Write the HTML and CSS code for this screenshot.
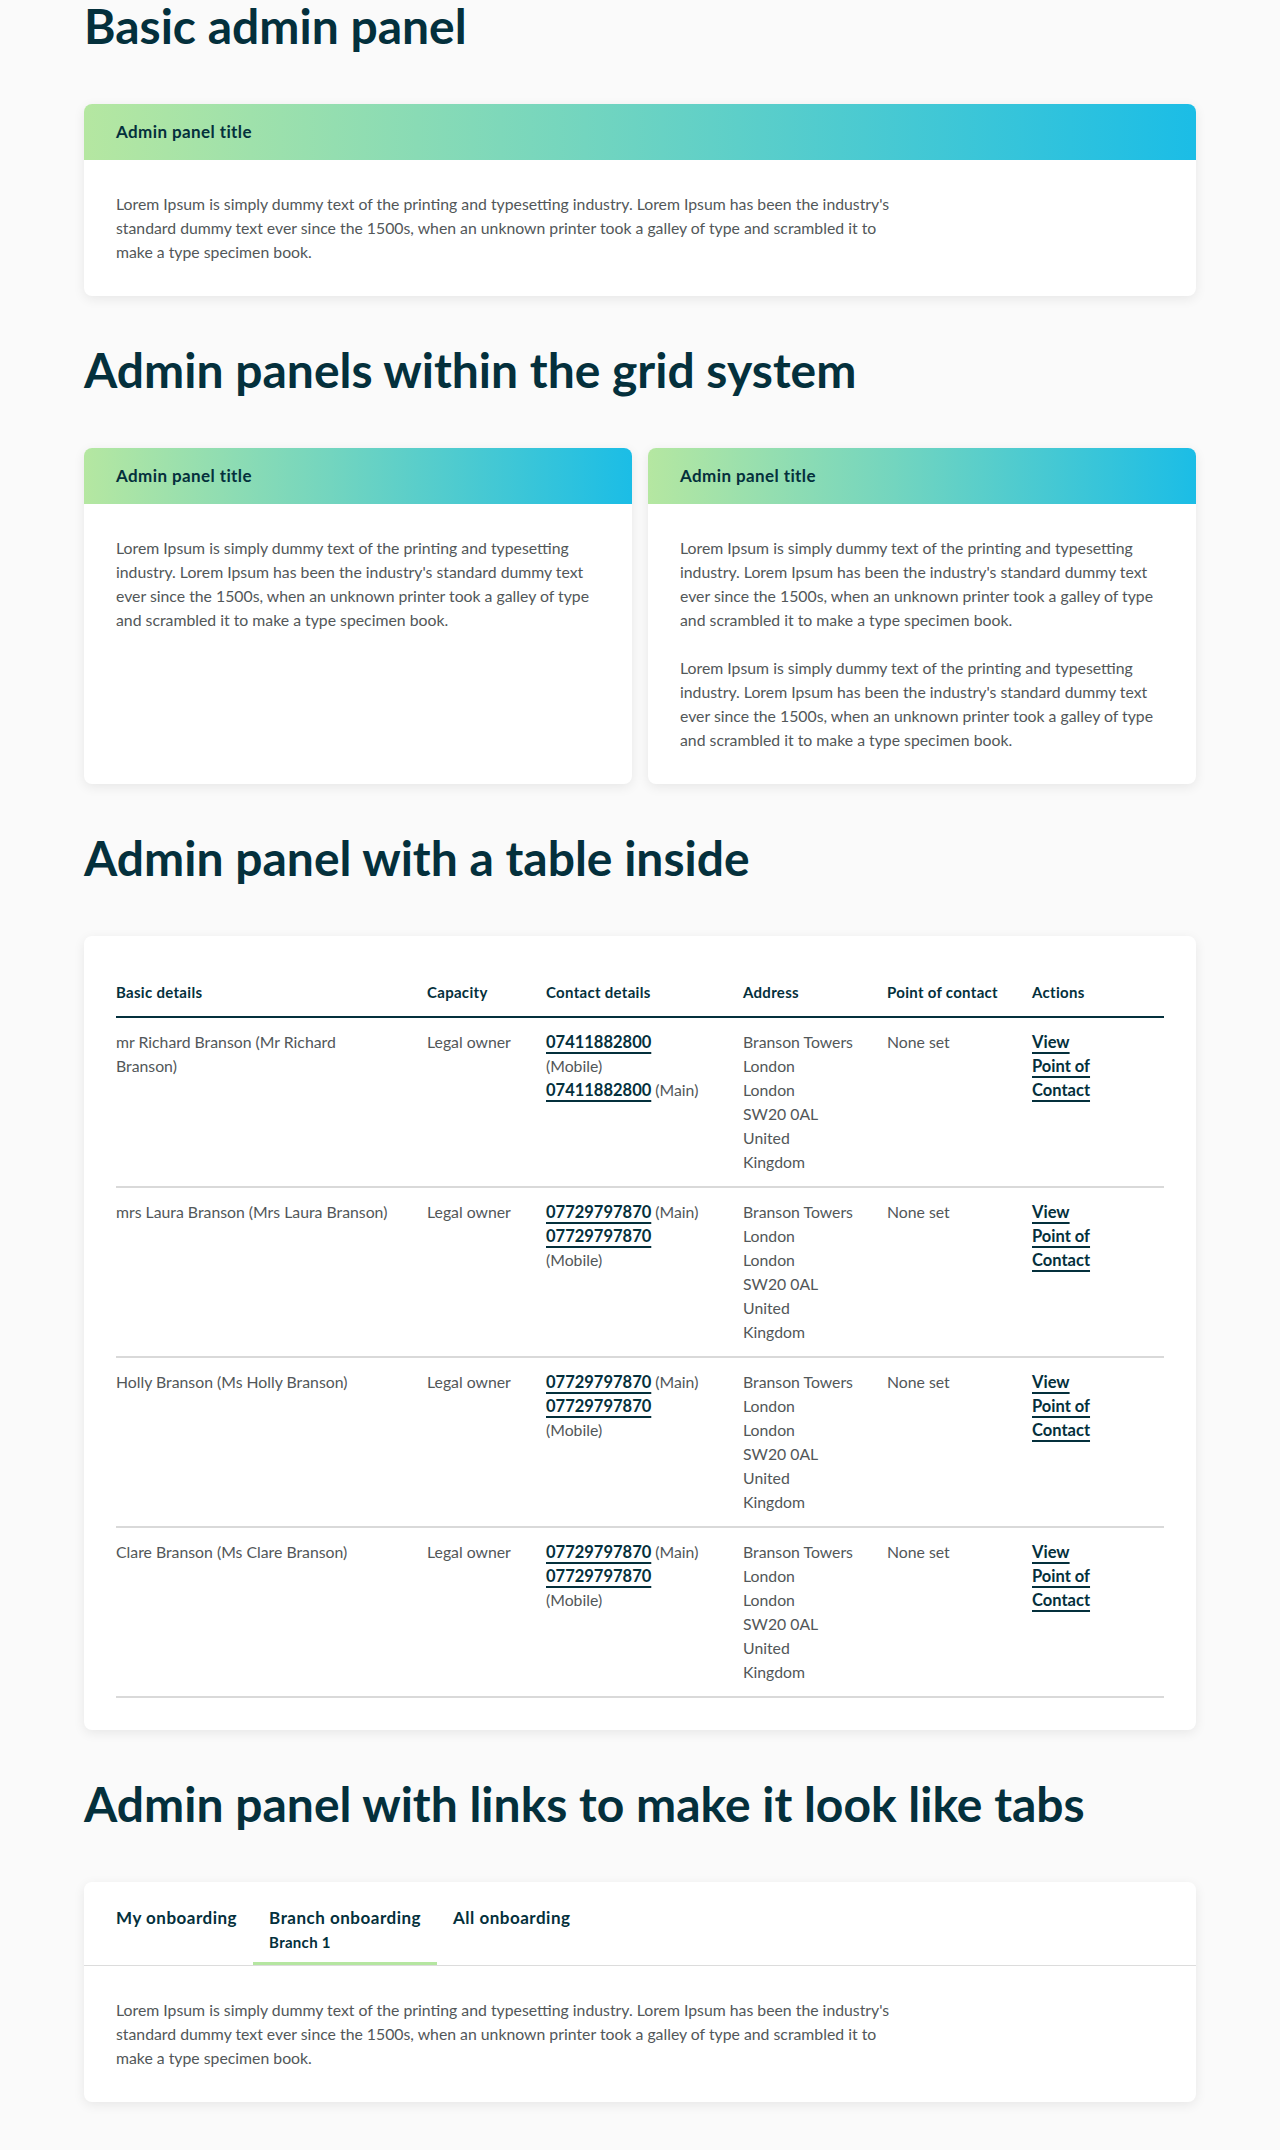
FILE: index.html
```html
<!DOCTYPE html>
<html lang="en">
<head>
<meta charset="utf-8">
<title>Admin panels</title>
<link rel="stylesheet" href="styles.css">
</head>
<body>
<main class="page">
  <section class="section">
    <h1 class="section-title">Basic admin panel</h1>
    <div class="panel">
      <div class="panel-header"><h2 class="panel-title">Admin panel title</h2></div>
      <div class="panel-body">
        <p class="panel-text panel-text-limited">Lorem Ipsum is simply dummy text of the printing and typesetting industry. Lorem Ipsum has been the industry's standard dummy text ever since the 1500s, when an unknown printer took a galley of type and scrambled it to make a type specimen book.</p>
      </div>
    </div>
  </section>

  <section class="section">
    <h1 class="section-title">Admin panels within the grid system</h1>
    <div class="panel-grid">
      <div class="panel">
        <div class="panel-header"><h2 class="panel-title">Admin panel title</h2></div>
        <div class="panel-body">
          <p class="panel-text">Lorem Ipsum is simply dummy text of the printing and typesetting industry. Lorem Ipsum has been the industry's standard dummy text ever since the 1500s, when an unknown printer took a galley of type and scrambled it to make a type specimen book.</p>
        </div>
      </div>
      <div class="panel">
        <div class="panel-header"><h2 class="panel-title">Admin panel title</h2></div>
        <div class="panel-body">
          <p class="panel-text">Lorem Ipsum is simply dummy text of the printing and typesetting industry. Lorem Ipsum has been the industry's standard dummy text ever since the 1500s, when an unknown printer took a galley of type and scrambled it to make a type specimen book.</p>
          <p class="panel-text">Lorem Ipsum is simply dummy text of the printing and typesetting industry. Lorem Ipsum has been the industry's standard dummy text ever since the 1500s, when an unknown printer took a galley of type and scrambled it to make a type specimen book.</p>
        </div>
      </div>
    </div>
  </section>

  <section class="section">
    <h1 class="section-title">Admin panel with a table inside</h1>
    <div class="panel">
      <div class="panel-body">
        <table class="data-table">
          <colgroup>
            <col class="col-basic">
            <col class="col-capacity">
            <col class="col-contact">
            <col class="col-address">
            <col class="col-poc">
            <col class="col-actions">
          </colgroup>
          <thead>
            <tr>
              <th class="cell-basic">Basic details</th>
              <th>Capacity</th>
              <th class="cell-contact">Contact details</th>
              <th class="cell-address">Address</th>
              <th>Point of contact</th>
              <th class="cell-actions">Actions</th>
            </tr>
          </thead>
          <tbody>
            <tr>
              <td class="cell-basic">mr Richard Branson (Mr Richard Branson)</td>
              <td>Legal owner</td>
              <td class="cell-contact">
                <div><a class="link" href="#">07411882800</a> (Mobile)</div>
                <div><a class="link" href="#">07411882800</a> (Main)</div>
              </td>
              <td class="cell-address">
                <span class="addr-line addr-nowrap">Branson Towers</span>
                <span class="addr-line">London</span>
                <span class="addr-line">London</span>
                <span class="addr-line">SW20 0AL</span>
                <span class="addr-line">United Kingdom</span>
              </td>
              <td>None set</td>
              <td class="cell-actions">
                <div><a class="link" href="#">View</a></div>
                <div><a class="link" href="#">Point of Contact</a></div>
              </td>
            </tr>
            <tr>
              <td class="cell-basic">mrs Laura Branson (Mrs Laura Branson)</td>
              <td>Legal owner</td>
              <td class="cell-contact">
                <div><a class="link" href="#">07729797870</a> (Main)</div>
                <div><a class="link" href="#">07729797870</a> (Mobile)</div>
              </td>
              <td class="cell-address">
                <span class="addr-line addr-nowrap">Branson Towers</span>
                <span class="addr-line">London</span>
                <span class="addr-line">London</span>
                <span class="addr-line">SW20 0AL</span>
                <span class="addr-line">United Kingdom</span>
              </td>
              <td>None set</td>
              <td class="cell-actions">
                <div><a class="link" href="#">View</a></div>
                <div><a class="link" href="#">Point of Contact</a></div>
              </td>
            </tr>
            <tr>
              <td class="cell-basic">Holly Branson (Ms Holly Branson)</td>
              <td>Legal owner</td>
              <td class="cell-contact">
                <div><a class="link" href="#">07729797870</a> (Main)</div>
                <div><a class="link" href="#">07729797870</a> (Mobile)</div>
              </td>
              <td class="cell-address">
                <span class="addr-line addr-nowrap">Branson Towers</span>
                <span class="addr-line">London</span>
                <span class="addr-line">London</span>
                <span class="addr-line">SW20 0AL</span>
                <span class="addr-line">United Kingdom</span>
              </td>
              <td>None set</td>
              <td class="cell-actions">
                <div><a class="link" href="#">View</a></div>
                <div><a class="link" href="#">Point of Contact</a></div>
              </td>
            </tr>
            <tr>
              <td class="cell-basic">Clare Branson (Ms Clare Branson)</td>
              <td>Legal owner</td>
              <td class="cell-contact">
                <div><a class="link" href="#">07729797870</a> (Main)</div>
                <div><a class="link" href="#">07729797870</a> (Mobile)</div>
              </td>
              <td class="cell-address">
                <span class="addr-line addr-nowrap">Branson Towers</span>
                <span class="addr-line">London</span>
                <span class="addr-line">London</span>
                <span class="addr-line">SW20 0AL</span>
                <span class="addr-line">United Kingdom</span>
              </td>
              <td>None set</td>
              <td class="cell-actions">
                <div><a class="link" href="#">View</a></div>
                <div><a class="link" href="#">Point of Contact</a></div>
              </td>
            </tr>
          </tbody>
        </table>
      </div>
    </div>
  </section>

  <section class="section">
    <h1 class="section-title">Admin panel with links to make it look like tabs</h1>
    <div class="panel">
      <nav class="tabs">
        <a class="tab" href="#"><span class="tab-label">My onboarding</span></a>
        <a class="tab tab-active" href="#"><span class="tab-label">Branch onboarding</span><span class="tab-sub">Branch 1</span></a>
        <a class="tab" href="#"><span class="tab-label">All onboarding</span></a>
      </nav>
      <div class="panel-body">
        <p class="panel-text panel-text-limited">Lorem Ipsum is simply dummy text of the printing and typesetting industry. Lorem Ipsum has been the industry's standard dummy text ever since the 1500s, when an unknown printer took a galley of type and scrambled it to make a type specimen book.</p>
      </div>
    </div>
  </section>
</main>
</body>
</html>
```

FILE: styles.css
```css
* {
  box-sizing: border-box;
}

html,
body {
  margin: 0;
  padding: 0;
}

body {
  background: #fafafa;
  font-family: Lato, "Noto Sans", "Liberation Sans", sans-serif;
  color: #04303c;
}

.page {
  max-width: 1112px;
  margin: 0 auto;
  padding: 0 0 48px;
}

.section + .section {
  margin-top: 48px;
}

.section-title {
  margin: 0 0 52px;
  font-size: 48px;
  line-height: 52px;
  font-weight: 700;
  color: #04303c;
}

.panel {
  background: #ffffff;
  border-radius: 8px;
  box-shadow: 0 3px 12px rgba(0, 0, 0, 0.08);
  overflow: hidden;
}

.panel-header {
  height: 56px;
  padding: 0 32px;
  display: flex;
  align-items: center;
  background: linear-gradient(90deg, #b5e7a1 0%, #73d5bf 45%, #1bbde6 100%);
}

.panel-title {
  margin: 0;
  font-size: 17px;
  line-height: 24px;
  font-weight: 700;
  letter-spacing: 0.4px;
  color: #04303c;
}

.panel-body {
  padding: 32px;
}

.panel-text {
  margin: 0 0 24px;
  font-size: 15.8px;
  line-height: 24px;
  color: #525759;
}

.panel-text:last-child {
  margin-bottom: 0;
}

.panel-text-limited {
  max-width: 800px;
}

.panel-grid {
  display: grid;
  grid-template-columns: 1fr 1fr;
  gap: 16px;
}

/* table */
.data-table {
  width: 100%;
  border-collapse: collapse;
  table-layout: fixed;
}

.col-basic { width: 311px; }
.col-capacity { width: 119px; }
.col-contact { width: 197px; }
.col-address { width: 144px; }
.col-poc { width: 145px; }
.col-actions { width: 132px; }

.data-table th {
  text-align: left;
  font-size: 15px;
  line-height: 24px;
  font-weight: 700;
  letter-spacing: 0.3px;
  color: #04303c;
  padding: 12px 16px 12px 0;
  border-bottom: 2px solid #04303c;
}

.data-table td {
  vertical-align: top;
  text-align: left;
  font-size: 15.8px;
  line-height: 24px;
  color: #525759;
  padding: 12px 24px 12px 0;
  border-bottom: 2px solid #d9d9d9;
}

.data-table .cell-basic {
  padding-right: 37px;
}

.data-table .cell-contact {
  padding-right: 36px;
}

.data-table .cell-address {
  padding-right: 48px;
}

.data-table .cell-actions {
  padding-right: 24px;
}

.addr-line {
  display: block;
}

.addr-nowrap {
  white-space: nowrap;
}

.link {
  font-size: 16.5px;
  font-weight: 700;
  color: #04303c;
  text-decoration: underline;
  text-decoration-thickness: 2px;
  text-underline-offset: 4px;
}

/* tabs */
.tabs {
  display: flex;
  padding: 0 16px;
  border-bottom: 1px solid #dcdcdc;
}

.tab {
  display: flex;
  flex-direction: column;
  padding: 24px 16px 8px;
  border-bottom: 3px solid transparent;
  text-decoration: none;
  color: #04303c;
}

.tab-active {
  border-bottom-color: #b5e6a1;
}

.tab-label {
  font-size: 17px;
  line-height: 24px;
  font-weight: 700;
  letter-spacing: 0.5px;
}

.tab-sub {
  font-size: 15px;
  line-height: 24px;
  font-weight: 700;
  letter-spacing: 0.3px;
}
```
